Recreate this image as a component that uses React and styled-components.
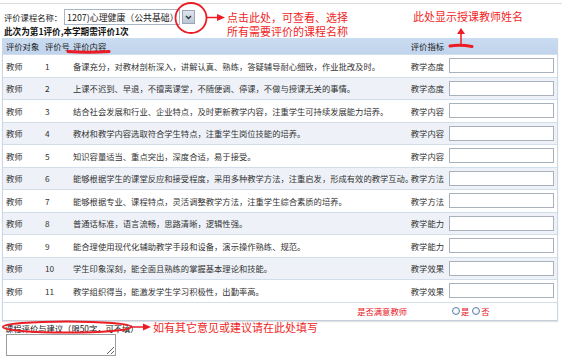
import React from 'react';
import styled, { createGlobalStyle } from 'styled-components';

const GlobalStyle = createGlobalStyle`
  html, body {
    margin: 0;
    padding: 0;
    background: #fff;
  }
  body {
    font-family: "Noto Sans CJK SC", "Noto Sans", sans-serif;
    font-size: 8.3px;
    color: #222;
  }
`;

const Page = styled.div`
  position: relative;
  width: 562px;
  height: 359px;
  overflow: hidden;
`;

const TopRule = styled.div`
  height: 3px;
  border-bottom: 1px solid #dcdcdc;
`;

const CourseBar = styled.div`
  display: flex;
  align-items: center;
  height: 16px;
  margin-top: 5px;
  padding-left: 4px;
  gap: 2px;
`;

const Label = styled.span`
  white-space: nowrap;
`;

const SelectBox = styled.div`
  display: flex;
  align-items: center;
  width: 116px;
  height: 16px;
  box-sizing: border-box;
  border: 1px solid #a9b6c6;
  padding-left: 2px;
  font-size: 8.9px;
  white-space: nowrap;
  overflow: hidden;
`;

const DropButton = styled.div`
  width: 13px;
  height: 14px;
  box-sizing: border-box;
  border: 1px solid #9aa6b6;
  background: linear-gradient(#dfe5ee, #bcc6d4);
  display: flex;
  align-items: center;
  justify-content: center;
`;

const Notice = styled.div`
  height: 12px;
  line-height: 12px;
  padding-left: 4px;
  font-weight: bold;
  font-size: 8.6px;
  color: #111;
`;

const Table = styled.div`
  margin: 1px 0 0 2px;
  width: 556px;
  box-sizing: border-box;
  border-left: 1px solid #c9d7e8;
  border-right: 1px solid #c9d7e8;
  border-bottom: 1px solid #c3cfdd;
  box-shadow: 0 1px 1px #e2e2e2;
`;

const Row = styled.div`
  display: grid;
  grid-template-columns: 42px 28px 335px 40px 109px;
  align-items: center;
  height: ${p => p.$h}px;
  box-sizing: border-box;
  background: ${p => p.$bg};
  border-bottom: ${p => (p.$last ? 'none' : '1px solid #d3deeb')};
  color: ${p => (p.$head ? '#1a1a1a' : '#333')};
`;

const Cell = styled.div`
  white-space: nowrap;
  padding-left: ${p => p.$pl || 0}px;
  padding-right: ${p => p.$pr || 0}px;
  text-align: ${p => p.$align || 'left'};
  color: ${p => p.$color || 'inherit'};
`;

const ScoreInput = styled.input`
  display: block;
  width: 105px;
  height: 15px;
  margin: 0 0 0 1px;
  padding: 0;
  box-sizing: border-box;
  border: 1px solid #a9b1bc;
  background: #fff;
`;

const RadioGroup = styled.div`
  display: flex;
  align-items: center;
  padding-left: 4px;
  color: #e8141c;
`;

const Radio = styled.input.attrs({ type: 'radio' })`
  appearance: none;
  width: 8px;
  height: 8px;
  margin: 0 1px 0 0;
  border: 1px solid #5f7ea6;
  border-radius: 50%;
  background: radial-gradient(circle at 40% 40%, #fff, #dde6f2);
  box-sizing: border-box;
`;

const RadioText = styled.span`
  margin-right: 3px;
`;

const CommentLabel = styled.div`
  height: 12px;
  line-height: 12px;
  margin-top: 1px;
  padding-left: 5px;
  white-space: nowrap;
  color: #111;
`;

const CommentBox = styled.textarea`
  display: block;
  width: 110px;
  height: 22px;
  margin: 0 0 0 6px;
  padding: 0;
  box-sizing: border-box;
  border: 1px solid #9c9c9c;
  font-size: 8px;
`;

const Note = styled.div`
  position: absolute;
  left: ${p => p.$left}px;
  top: ${p => p.$top}px;
  font-size: 11px;
  line-height: 13px;
  height: 13px;
  color: #ef1f27;
  white-space: nowrap;
`;

const Marks = styled.svg`
  position: absolute;
  left: 0;
  top: 0;
  pointer-events: none;
`;

const items = [
  ['备课充分，对教材剖析深入，讲解认真、熟练，答疑辅导耐心细致，作业批改及时。', '教学态度'],
  ['上课不迟到、早退，不擅离课堂，不随便调、停课，不做与授课无关的事情。', '教学态度'],
  ['结合社会发展和行业、企业特点，及时更新教学内容，注重学生可持续发展能力培养。', '教学内容'],
  ['教材和教学内容选取符合学生特点，注重学生岗位技能的培养。', '教学内容'],
  ['知识容量适当、重点突出，深度合适，易于接受。', '教学内容'],
  ['能够根据学生的课堂反应和接受程度，采用多种教学方法，注重启发，形成有效的教学互动。', '教学方法'],
  ['能够根据专业、课程特点，灵活调整教学方法，注重学生综合素质的培养。', '教学方法'],
  ['普通话标准，语言流畅，思路清晰，逻辑性强。', '教学能力'],
  ['能合理使用现代化辅助教学手段和设备，演示操作熟练、规范。', '教学能力'],
  ['学生印象深刻，能全面且熟练的掌握基本理论和技能。', '教学效果'],
  ['教学组织得当，能激发学生学习积极性，出勤率高。', '教学效果'],
];

const RED = '#ec1c24';

export default function App() {
  return (
    <Page>
      <GlobalStyle />
      <TopRule />
      <CourseBar>
        <Label>评价课程名称：</Label>
        <SelectBox>1207)心理健康（公共基础）</SelectBox>
        <DropButton>
          <svg width="7" height="5" viewBox="0 0 7 5">
            <path d="M1 1 L3.5 3.5 L6 1" fill="none" stroke="#2b3440" strokeWidth="1.4" />
          </svg>
        </DropButton>
      </CourseBar>
      <Notice>此次为第1评价,本学期需评价1次</Notice>
      <Table>
        <Row $h={17} $bg="linear-gradient(#cadcf0, #c0d4ec)" $head>
          <Cell $pl={3}>评价对象</Cell>
          <Cell>评价号</Cell>
          <Cell>评价内容</Cell>
          <Cell $align="right" $pr={4}>评价指标</Cell>
          <Cell />
        </Row>
        {items.map(([text, kind], i) => (
          <Row key={i} $h={22.5} $bg={i % 2 ? '#eef2f8' : '#fff'}>
            <Cell $pl={3}>教师</Cell>
            <Cell>{i + 1}</Cell>
            <Cell>{text}</Cell>
            <Cell $align="right" $pr={4}>{kind}</Cell>
            <Cell>
              <ScoreInput />
            </Cell>
          </Row>
        ))}
        <Row $h={17.5} $bg="#fff" $last>
          <Cell />
          <Cell />
          <Cell $align="right" $pr={1} $color="#e8141c">是否满意教师</Cell>
          <Cell />
          <RadioGroup>
            <Radio name="ok" />
            <RadioText>是</RadioText>
            <Radio name="ok" />
            <RadioText>否</RadioText>
          </RadioGroup>
        </Row>
      </Table>
      <CommentLabel>课程评价与建议（限50字，可不填）</CommentLabel>
      <CommentBox />

      <Note $left={227} $top={11}>点击此处，可查看、选择</Note>
      <Note $left={227} $top={24.5}>所有需要评价的课程名称</Note>
      <Note $left={413} $top={10}>此处显示授课教师姓名</Note>
      <Note $left={153} $top={320.5}>如有其它意见或建议请在此处填写</Note>

      <Marks width="562" height="359" viewBox="0 0 562 359">
        <ellipse cx="191" cy="18" rx="15.5" ry="15" fill="none" stroke={RED} strokeWidth="1.8" />
        <line x1="207" y1="17.5" x2="219" y2="17.5" stroke={RED} strokeWidth="1.5" />
        <path d="M217 14 L225 17.5 L217 21 Z" fill={RED} />
        <line x1="461" y1="45" x2="461" y2="33" stroke={RED} strokeWidth="1.5" />
        <path d="M457 34 L461 28 L465 34 Z" fill={RED} />
        <path d="M450 46 Q460 44.5 472 46.5" fill="none" stroke={RED} strokeWidth="3" strokeLinecap="round" />
        <path d="M68 51.5 Q88 53 109 51.5" fill="none" stroke={RED} strokeWidth="3" strokeLinecap="round" />
        <ellipse cx="67" cy="327" rx="64" ry="5.5" fill="none" stroke={RED} strokeWidth="2" />
        <line x1="131" y1="327" x2="144" y2="327" stroke={RED} strokeWidth="1.5" />
        <path d="M143 323.5 L151 327 L143 330.5 Z" fill={RED} />
      </Marks>
    </Page>
  );
}
